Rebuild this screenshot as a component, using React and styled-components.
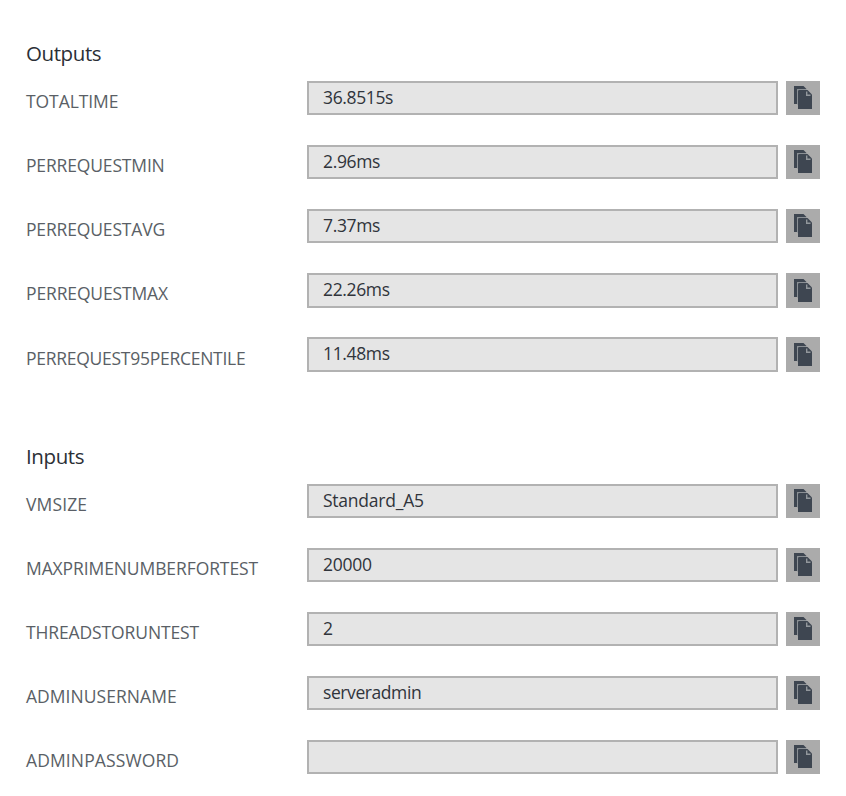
import React from "react";
import styled, { createGlobalStyle } from "styled-components";

const GlobalStyle = createGlobalStyle`
  * { box-sizing: border-box; }
  body {
    margin: 0;
    background: #fff;
    font-family: "Open Sans", "Noto Sans", sans-serif;
    font-weight: 400;
    overflow: hidden;
  }
`;

const Blade = styled.main`
  width: 846px;
  height: 796px;
  padding: 38px 26px 0;
  display: flex;
  flex-direction: column;
  gap: 70px;
`;

const Section = styled.section`
  display: flex;
  flex-direction: column;
`;

const Heading = styled.h2`
  margin: 0 0 13px;
  height: 30px;
  font-size: 20.5px;
  line-height: 30px;
  font-weight: 400;
  letter-spacing: -0.4px;
  color: #2b2f36;
`;

const Rows = styled.div`
  display: grid;
  grid-auto-rows: 34px;
  row-gap: 30px;
`;

const Row = styled.div`
  display: grid;
  grid-template-columns: 281px 471px 34px;
  height: ${(p) => (p.$tall ? 35 : 34)}px;
`;

const Label = styled.label`
  padding-top: ${(p) => (p.$low ? 9 : 8)}px;
  font-size: 17.5px;
  line-height: 24px;
  letter-spacing: ${(p) => p.$tracking || 0}px;
  white-space: nowrap;
  color: #5a5f66;
`;

const Value = styled.div`
  height: 100%;
  padding: 2px 14px 0;
  border: 2px solid #b2b2b2;
  background: #e5e5e5;
  font-size: 17.5px;
  line-height: 24px;
  letter-spacing: ${(p) => p.$tracking || 0}px;
  white-space: nowrap;
  color: #30343b;
`;

const CopyButton = styled.button`
  display: block;
  width: 34px;
  height: 100%;
  margin: 0 0 0 8px;
  padding: 0;
  border: 0;
  background: #ababab;
`;

const Icon = styled.svg`
  display: block;
  width: 34px;
  height: 34px;
`;

function CopyIcon() {
  return (
    <Icon viewBox="0 0 34 34" aria-hidden="true">
      <path d="M8 5H17.5L20.5 8V23H8Z" fill="#3e4651" />
      <path d="M11 23.5V9.2Q11 8 12.2 8H21L26 13V28H12V23.5Z" fill="#ababab" />
      <path d="M11.5 23.5V8.5H20.5" fill="none" stroke="#8b9095" />
      <path d="M12 10Q12 9 13 9H21.5L26 13.5V28H12Z" fill="#3e4651" />
      <path d="M20.7 10.5V14.3H24.5" fill="none" stroke="#92979c" strokeWidth="1.4" />
    </Icon>
  );
}

const sections = [
  {
    title: "Outputs",
    rows: [
      { label: "TOTALTIME", value: "36.8515s", labelTracking: -0.08, valueTracking: -0.36 },
      { label: "PERREQUESTMIN", value: "2.96ms", labelTracking: -0.16, valueTracking: -0.36 },
      { label: "PERREQUESTAVG", value: "7.37ms", labelTracking: -0.16, valueTracking: -0.36 },
      { label: "PERREQUESTMAX", value: "22.26ms", labelTracking: -0.14, valueTracking: -0.36, tall: true },
      { label: "PERREQUEST95PERCENTILE", value: "11.48ms", labelTracking: -0.27, valueTracking: -0.36, tall: true, low: true },
    ],
  },
  {
    title: "Inputs",
    rows: [
      { label: "VMSIZE", value: "Standard_A5", labelTracking: 0.14, valueTracking: -0.23 },
      { label: "MAXPRIMENUMBERFORTEST", value: "20000", labelTracking: -0.1, valueTracking: -0.28 },
      { label: "THREADSTORUNTEST", value: "2", labelTracking: -0.12 },
      { label: "ADMINUSERNAME", value: "serveradmin", labelTracking: 0.04, valueTracking: -0.42 },
      { label: "ADMINPASSWORD", value: "", labelTracking: 0.12 },
    ],
  },
];

export default function App() {
  return (
    <>
      <GlobalStyle />
      <Blade>
        {sections.map((s) => (
          <Section key={s.title}>
            <Heading>{s.title}</Heading>
            <Rows>
              {s.rows.map((r) => (
                <Row key={r.label} $tall={r.tall}>
                  <Label $low={r.low} $tracking={r.labelTracking}>{r.label}</Label>
                  <Value $tracking={r.valueTracking}>{r.value}</Value>
                  <CopyButton type="button" aria-label={"Copy " + r.label}>
                    <CopyIcon />
                  </CopyButton>
                </Row>
              ))}
            </Rows>
          </Section>
        ))}
      </Blade>
    </>
  );
}
